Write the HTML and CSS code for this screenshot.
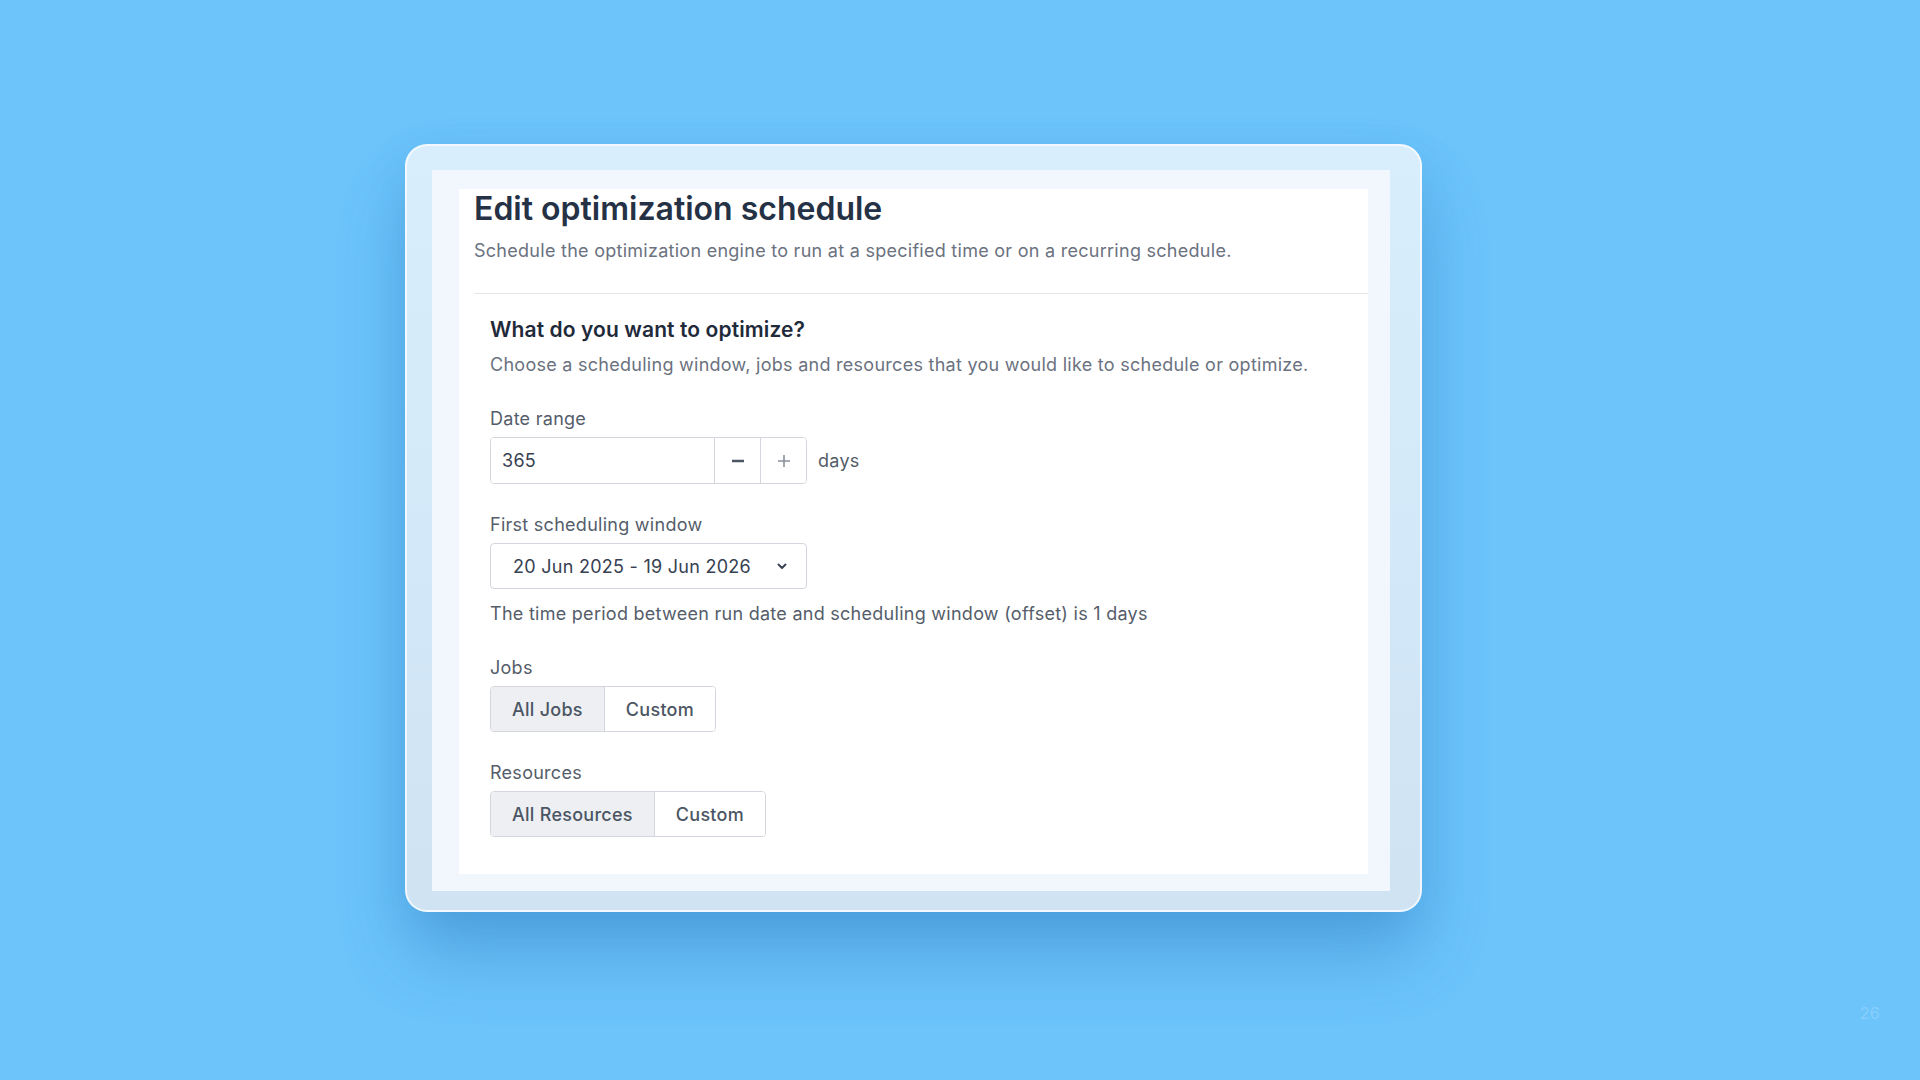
FILE: index.html
```html
<!DOCTYPE html>
<html lang="en">
<head>
    <meta charset="UTF-8">
    <meta name="viewport" content="width=device-width, initial-scale=1.0">
    <title>Edit optimization schedule</title>
    <link rel="stylesheet" href="styles.css">
</head>
<body>
    <div class="slide">
        <div class="stage">
            <div class="frame">
                <div class="panel">
                    <div class="sheet">
                        <header class="sheet-head">
                            <h1>Edit optimization schedule</h1>
                            <p>Schedule the optimization engine to run at a specified time or on a recurring schedule.</p>
                        </header>

                        <section class="section">
                            <h2>What do you want to optimize?</h2>
                            <p class="section-desc">Choose a scheduling window, jobs and resources that you would like to schedule or optimize.</p>

                            <div class="field">
                                <label for="date-range">Date range</label>
                                <div class="row">
                                    <div class="stepper">
                                        <input type="text" id="date-range" value="365">
                                        <button class="step step-minus" type="button">
                                            <svg width="14" height="14" viewBox="0 0 14 14"><path d="M1 7h12" stroke="#4b5563" stroke-width="2.4"/></svg>
                                        </button>
                                        <button class="step" type="button">
                                            <svg width="14" height="14" viewBox="0 0 14 14"><path d="M1 7h12M7 1v12" stroke="#8a919c" stroke-width="1.6"/></svg>
                                        </button>
                                    </div>
                                    <span class="unit">days</span>
                                </div>
                            </div>

                            <div class="field">
                                <label>First scheduling window</label>
                                <div class="select">
                                    <span>20 Jun 2025 - 19 Jun 2026</span>
                                    <svg width="10" height="7" viewBox="0 0 10 7"><path d="M1.5 1.5l3.5 3.5 3.5-3.5" fill="none" stroke="#374151" stroke-width="1.9" stroke-linecap="round" stroke-linejoin="round"/></svg>
                                </div>
                                <p class="hint">The time period between run date and scheduling window (offset) is 1 days</p>
                            </div>

                            <div class="field">
                                <label>Jobs</label>
                                <div class="toggle">
                                    <button class="toggle-btn active" type="button">All Jobs</button>
                                    <button class="toggle-btn" type="button">Custom</button>
                                </div>
                            </div>

                            <div class="field">
                                <label>Resources</label>
                                <div class="toggle">
                                    <button class="toggle-btn active" type="button">All Resources</button>
                                    <button class="toggle-btn" type="button">Custom</button>
                                </div>
                            </div>
                        </section>
                    </div>
                </div>
            </div>
        </div>
        <div class="slide-num">26</div>
    </div>
</body>
</html>
```

FILE: styles.css
```css
body { margin: 0; background-color: #6cc4fb; font-family: 'Inter', 'Noto Sans', sans-serif; color: #374151; letter-spacing: 0.27px; }
.slide { height: 1080px; display: flex; flex-direction: column; overflow: hidden; }
.stage { padding: 144px 0 0 405px; }

/* outer glassy frame around the form */
.frame { box-sizing: border-box; width: 1017px; height: 768px; padding: 24px 30px 19px 25px; border: 2px solid rgba(255,255,255,0.7); border-radius: 22px; background: linear-gradient(180deg, #d9eefd 0%, #d2e7f7 60%, #cfe3f3 100%); box-shadow: 0 46px 70px -6px rgba(22, 96, 165, 0.32), 0 10px 40px rgba(30, 110, 180, 0.12); }
.panel { height: 100%; box-sizing: border-box; padding: 19px 22px 17px 27px; background-color: #f1f7fc; }
.sheet { height: 100%; box-sizing: border-box; padding: 0 0 0 15px; background-color: #fff; }

.sheet-head { padding-bottom: 29px; border-bottom: 1px solid #e3e6ea; }
.sheet-head h1 { margin: 0; font-size: 32px; line-height: 40px; font-weight: 600; color: #253145; letter-spacing: 0; }
.sheet-head p { margin: 8px 0 0; font-size: 18px; line-height: 27px; color: #6b7280; }

.section { padding: 22px 16px 0; }
.section h2 { margin: 0; font-size: 21px; line-height: 28px; font-weight: 600; color: #1f2a3a; letter-spacing: 0.1px; }
.section-desc { margin: 7px 0 0; font-size: 18px; line-height: 27px; color: #6b7280; }

.field { margin-top: 27px; }
.field label { display: block; margin-bottom: 5px; font-size: 18px; line-height: 27px; color: #555d6a; }

.row { display: flex; align-items: center; gap: 11px; }
.stepper { display: flex; height: 47px; box-sizing: border-box; border: 1px solid #d3d7dd; border-radius: 4px; overflow: hidden; }
.stepper input { width: 223px; box-sizing: border-box; border: 0; padding: 0 11px; font: inherit; font-size: 18px; letter-spacing: 0.27px; color: #374151; outline: none; }
.step { width: 46px; border: 0; border-left: 1px solid #d3d7dd; background: #fff; display: flex; align-items: center; justify-content: center; padding: 0; }
.unit { font-size: 18px; color: #555d6a; }

.select { width: 317px; height: 46px; box-sizing: border-box; border: 1px solid #d3d7dd; border-radius: 4px; display: flex; align-items: center; justify-content: space-between; padding: 0 19px 0 22px; font-size: 18px; color: #374151; }
.hint { margin: 11px 0 0; font-size: 18px; line-height: 27px; color: #555d6a; }

.toggle { display: inline-flex; height: 46px; box-sizing: border-box; border: 1px solid #d3d7dd; border-radius: 4px; overflow: hidden; }
.toggle-btn { border: 0; background: #fff; padding: 0 21px; font: inherit; font-size: 18px; font-weight: 500; letter-spacing: 0.27px; color: #4b5563; }
.toggle-btn + .toggle-btn { border-left: 1px solid #d3d7dd; }
.toggle-btn.active { background-color: #edeff3; }

.slide-num { margin-top: auto; padding: 0 40px 57px 0; text-align: right; font-size: 16px; line-height: 20px; color: #88cffc; }
```
